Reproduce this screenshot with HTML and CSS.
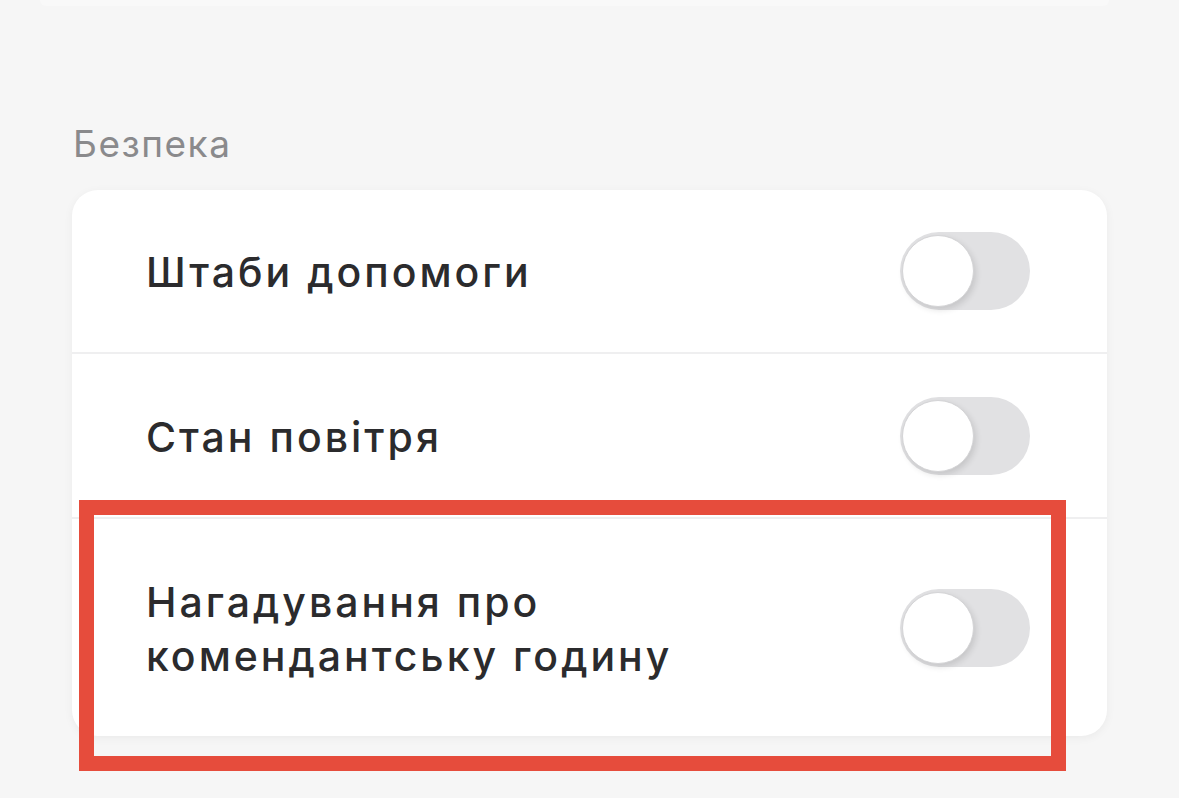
FILE: index.html
```html
<!DOCTYPE html>
<html lang="uk">
<head>
    <meta charset="UTF-8">
    <meta name="viewport" content="width=device-width, initial-scale=1.0">
    <title>Налаштування сповіщень</title>
    <link rel="stylesheet" href="styles.css">
</head>
<body>
    <div class="prev-card"></div>

    <section class="group">
        <h2 class="group-title">Безпека</h2>
        <div class="card">
            <div class="row">
                <span class="row-label">Штаби допомоги</span>
                <label class="switch"><input type="checkbox"><span class="knob"></span></label>
            </div>
            <div class="row">
                <span class="row-label">Стан повітря</span>
                <label class="switch"><input type="checkbox"><span class="knob"></span></label>
            </div>
            <div class="row row-tall">
                <span class="row-label">Нагадування про<br>комендантську годину</span>
                <label class="switch"><input type="checkbox"><span class="knob"></span></label>
                <div class="highlight"></div>
            </div>
        </div>
    </section>
</body>
</html>
```

FILE: styles.css
```css
/* Settings screen */
:root {
    --bg: #f6f6f6;
    --text: #2b2b2d;
    --muted: #8a8a8c;
    --divider: #efeff0;
    --track: #e1e1e3;
    --mark: #e64c3c;
}

* {
    box-sizing: border-box;
}

body {
    margin: 0;
    background: var(--bg);
    font-family: "Inter", "Noto Sans", sans-serif;
    color: var(--text);
    height: 798px;
    overflow: hidden;
}

.prev-card {
    height: 6px;
    margin: 0 70px 0 40px;
    background: #f9f9f9;
    border-radius: 0 0 20px 20px;
}

.group {
    padding: 0 72px;
}

.group-title {
    margin: 114px 0 0 1px;
    font-size: 37px;
    font-weight: 400;
    line-height: 48px;
    color: var(--muted);
    letter-spacing: 1.5px;
}

.card {
    margin-top: 22px;
    width: 1035px;
    background: #ffffff;
    border-radius: 26px;
    box-shadow: 0 2px 10px rgba(0, 0, 0, 0.05);
}

.row {
    position: relative;
    display: flex;
    align-items: center;
    justify-content: space-between;
    height: 164px;
    padding: 0 77px 0 74px;
    border-bottom: 2px solid var(--divider);
}

.row + .row {
    height: 165px;
}

.row-tall {
    height: 217px;
    border-bottom: none;
}

.row + .row-tall {
    height: 217px;
}

.row-label {
    font-size: 41px;
    line-height: 54px;
    letter-spacing: 3px;
    font-weight: 500;
    padding-top: 2px;
}

.switch {
    position: relative;
    display: block;
    width: 130px;
    height: 78px;
    border-radius: 39px;
    background: var(--track);
    flex-shrink: 0;
}

.switch input {
    display: none;
}

.knob {
    position: absolute;
    left: 2px;
    top: 3px;
    width: 72px;
    height: 72px;
    border-radius: 50%;
    background: #ffffff;
    border: 1px solid #d4d4d6;
    box-shadow: 2px 3px 6px rgba(0, 0, 0, 0.12);
}

.highlight {
    position: absolute;
    left: 7px;
    top: -19px;
    width: 987px;
    height: 271px;
    border: 15px solid var(--mark);
    pointer-events: none;
}
```
